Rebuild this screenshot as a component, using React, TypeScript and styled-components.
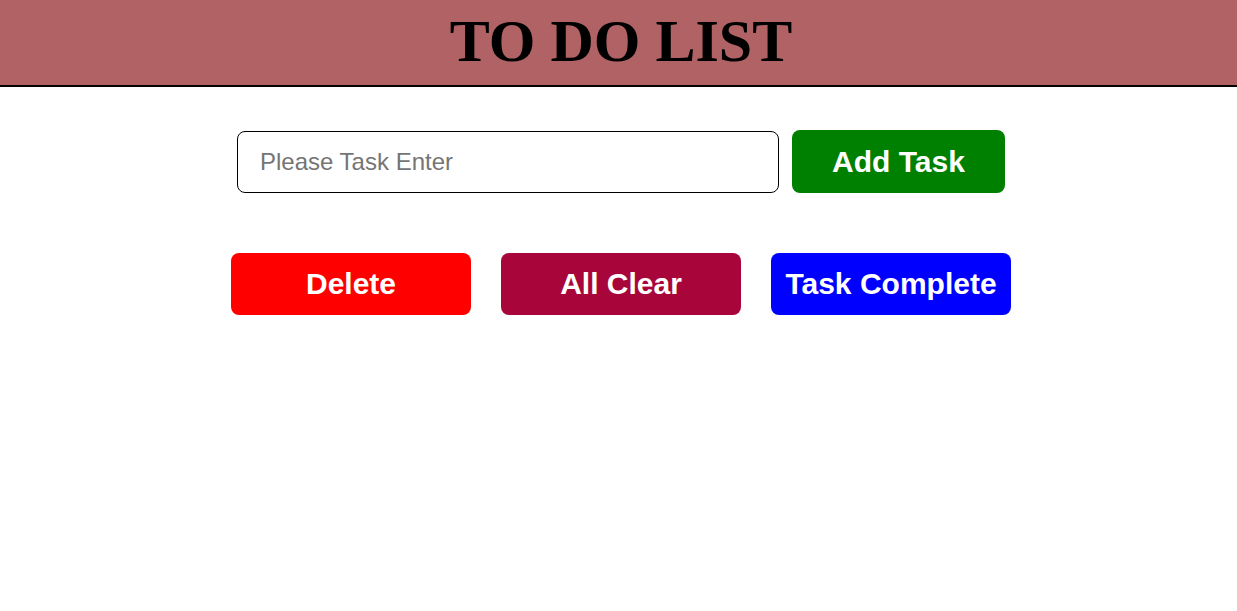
import React from "react";
import styled, { createGlobalStyle } from "styled-components";

const Global = createGlobalStyle`
  html, body { margin: 0; padding: 0; background: #fff; }
  body { font-family: "Liberation Sans", Arial, sans-serif; }
  * { box-sizing: border-box; }
`;

const Header = styled.header`
  height: 87px;
  background: #b06264;
  border-bottom: 2px solid #000;
  display: flex;
  align-items: center;
  justify-content: center;
  padding-left: 5px;
`;

const Title = styled.h1`
  margin: 0;
  font-family: "Liberation Serif", "Times New Roman", serif;
  font-weight: 700;
  font-size: 60px;
  line-height: 1;
  color: #000;
  padding-bottom: 4px;
`;

const Main = styled.main`
  display: flex;
  flex-direction: column;
  align-items: center;
  padding-left: 5px;
  padding-top: 43px;
  gap: 60px;
`;

const InputRow = styled.div`
  display: flex;
  align-items: center;
  gap: 13px;
`;

const TaskInput = styled.input`
  width: 542px;
  height: 62px;
  border: 1px solid #000;
  border-radius: 8px;
  padding: 0 22px;
  font-family: "Liberation Sans", Arial, sans-serif;
  font-size: 24px;
  color: #000;
  outline: none;
  &::placeholder { color: #757575; }
`;

const Button = styled.button<{ $bg: string; $w: number; $h?: number }>`
  width: ${(p) => p.$w}px;
  height: ${(p) => p.$h ?? 62}px;
  border: none;
  border-radius: 8px;
  background: ${(p) => p.$bg};
  color: #fff;
  font-family: "Liberation Sans", Arial, sans-serif;
  font-weight: 700;
  font-size: 30px;
  padding: 0;
  cursor: pointer;
`;

const ActionRow = styled.div`
  display: flex;
  gap: 30px;
`;

export default function App() {
  return (
    <>
      <Global />
      <Header>
        <Title>TO DO LIST</Title>
      </Header>
      <Main>
        <InputRow>
          <TaskInput placeholder="Please Task Enter" />
          <Button $bg="#008000" $w={213} $h={63}>Add Task</Button>
        </InputRow>
        <ActionRow>
          <Button $bg="#ff0000" $w={240}>Delete</Button>
          <Button $bg="#a8063b" $w={240}>All Clear</Button>
          <Button $bg="#0000ff" $w={240}>Task Complete</Button>
        </ActionRow>
      </Main>
    </>
  );
}
